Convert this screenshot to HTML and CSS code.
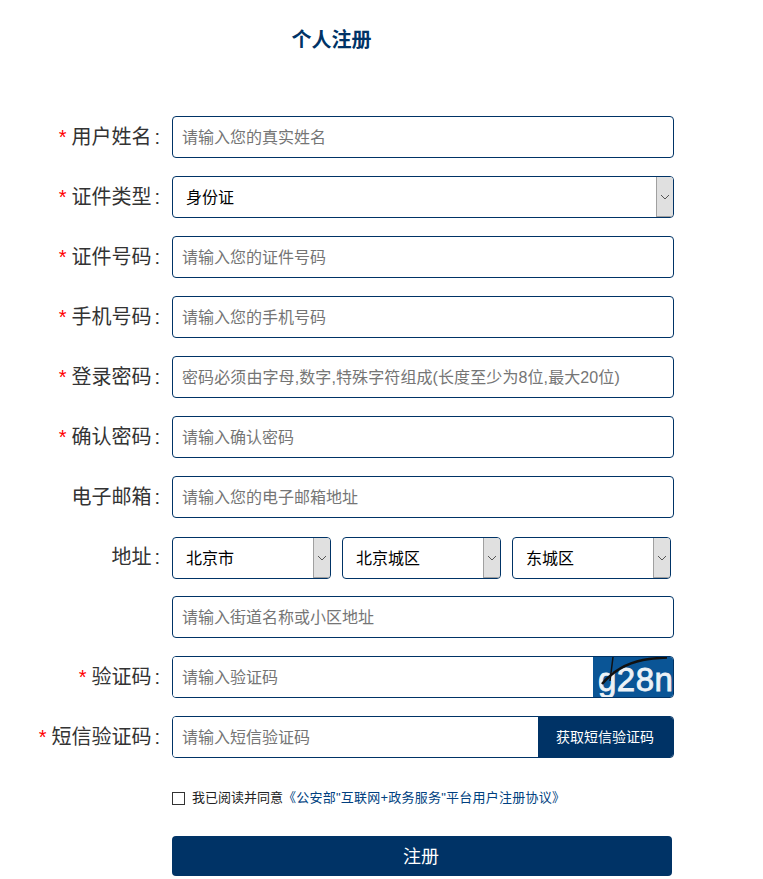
FILE: index.html
```html
<!DOCTYPE html>
<html lang="zh-CN">
<head>
    <meta charset="UTF-8">
    <meta name="viewport" content="width=device-width, initial-scale=1.0">
    <title>个人注册</title>
    <link rel="stylesheet" href="styles.css">
</head>
<body>
    <div class="register">
        <h1 class="title">个人注册</h1>
        <form class="form">
            <div class="row">
                <label class="label"><span class="star">*</span>用户姓名<span class="colon">:</span></label>
                <input class="input" type="text" placeholder="请输入您的真实姓名">
            </div>
            <div class="row">
                <label class="label"><span class="star">*</span>证件类型<span class="colon">:</span></label>
                <div class="select-box select-full">
                    <select class="select"><option>身份证</option></select>
                    <span class="arrow"><svg width="10" height="6" viewBox="0 0 10 6"><path d="M1 1l4 4 4-4" fill="none" stroke="#555" stroke-width="1"/></svg></span>
                </div>
            </div>
            <div class="row">
                <label class="label"><span class="star">*</span>证件号码<span class="colon">:</span></label>
                <input class="input" type="text" placeholder="请输入您的证件号码">
            </div>
            <div class="row">
                <label class="label"><span class="star">*</span>手机号码<span class="colon">:</span></label>
                <input class="input" type="text" placeholder="请输入您的手机号码">
            </div>
            <div class="row">
                <label class="label"><span class="star">*</span>登录密码<span class="colon">:</span></label>
                <input class="input input-long" type="password" placeholder="密码必须由字母,数字,特殊字符组成(长度至少为8位,最大20位)">
            </div>
            <div class="row">
                <label class="label"><span class="star">*</span>确认密码<span class="colon">:</span></label>
                <input class="input" type="password" placeholder="请输入确认密码">
            </div>
            <div class="row">
                <label class="label">电子邮箱<span class="colon">:</span></label>
                <input class="input" type="text" placeholder="请输入您的电子邮箱地址">
            </div>
            <div class="row">
                <label class="label">地址<span class="colon">:</span></label>
                <div class="address">
                    <div class="select-box">
                        <select class="select"><option>北京市</option></select>
                        <span class="arrow"><svg width="10" height="6" viewBox="0 0 10 6"><path d="M1 1l4 4 4-4" fill="none" stroke="#555" stroke-width="1"/></svg></span>
                    </div>
                    <div class="select-box">
                        <select class="select"><option>北京城区</option></select>
                        <span class="arrow"><svg width="10" height="6" viewBox="0 0 10 6"><path d="M1 1l4 4 4-4" fill="none" stroke="#555" stroke-width="1"/></svg></span>
                    </div>
                    <div class="select-box">
                        <select class="select"><option>东城区</option></select>
                        <span class="arrow"><svg width="10" height="6" viewBox="0 0 10 6"><path d="M1 1l4 4 4-4" fill="none" stroke="#555" stroke-width="1"/></svg></span>
                    </div>
                </div>
            </div>
            <div class="row">
                <span class="label"></span>
                <input class="input" type="text" placeholder="请输入街道名称或小区地址">
            </div>
            <div class="row">
                <label class="label"><span class="star">*</span>验证码<span class="colon">:</span></label>
                <div class="group">
                    <input class="group-input" type="text" placeholder="请输入验证码">
                    <svg class="captcha" width="80" height="40" viewBox="0 0 80 40">
                        <rect width="80" height="40" fill="#0a5596"/>
                        <text x="5" y="34" class="captcha-text">g28n</text>
                        <path d="M20 0L17 24" fill="none" stroke="#111" stroke-width="1.5"/>
                        <path d="M9 27C20 14 35 6 50 3C58 1.500 66 1 74 .5" fill="none" stroke="#111" stroke-width="2.500"/>
                    </svg>
                </div>
            </div>
            <div class="row">
                <label class="label"><span class="star">*</span>短信验证码<span class="colon">:</span></label>
                <div class="group">
                    <input class="group-input" type="text" placeholder="请输入短信验证码">
                    <button class="sms-btn" type="button">获取短信验证码</button>
                </div>
            </div>
            <div class="agree">
                <span class="checkbox"></span>
                <span>我已阅读并同意</span>
                <a class="agree-link" href="#">《公安部"互联网+政务服务"平台用户注册协议》</a>
            </div>
            <button class="submit" type="button">注册</button>
        </form>
    </div>
</body>
</html>
```

FILE: styles.css
```css
* {
    margin: 0;
    padding: 0;
    box-sizing: border-box;
}

body {
    font-family: "Liberation Sans", "Noto Sans CJK SC", sans-serif;
    background-color: #fff;
    color: #333;
}

.register {
    width: 763px;
    height: 879px;
    overflow: hidden;
}

.title {
    width: 663px;
    padding-top: 26px;
    font-size: 20px;
    line-height: 28px;
    font-weight: bold;
    text-align: center;
    color: #003366;
}

.form {
    padding-top: 62px;
}

.row {
    display: flex;
    align-items: flex-start;
    gap: 12px;
    height: 42px;
    margin-bottom: 18px;
}

.label {
    flex: none;
    width: 160px;
    font-size: 20px;
    line-height: 42px;
    text-align: right;
    white-space: nowrap;
}

.star {
    margin-right: 5px;
    color: #f00;
}

.colon {
    margin-left: 3px;
}

.input {
    width: 502px;
    height: 42px;
    padding: 2px 9px 0;
    font-family: inherit;
    font-size: 16px;
    border: 1px solid #003366;
    border-radius: 4px;
    outline: none;
}

.input-long {
    letter-spacing: .1px;
}

.input::placeholder,
.group-input::placeholder {
    color: #757575;
}

.select-box {
    position: relative;
    width: 159px;
    height: 42px;
}

.select-full {
    width: 502px;
}

.select {
    width: 100%;
    height: 100%;
    padding-left: 13px;
    font-family: inherit;
    font-size: 16px;
    color: #000;
    background-color: #fff;
    border: 1px solid #003366;
    border-radius: 4px;
    appearance: none;
    outline: none;
}

.arrow {
    position: absolute;
    top: 1px;
    right: 1px;
    bottom: 1px;
    width: 17px;
    display: flex;
    align-items: center;
    justify-content: center;
    background-color: #e0e0e0;
    border-left: 1px solid #a0a0a0;
    border-bottom: 1px solid #a0a0a0;
    border-radius: 0 3px 3px 0;
    pointer-events: none;
}

.address {
    display: flex;
    gap: 11px;
    margin-top: 1px;
}

.group {
    display: flex;
    width: 502px;
    height: 42px;
    border: 1px solid #003366;
    border-radius: 4px;
    overflow: hidden;
}

.group-input {
    flex: 1;
    min-width: 0;
    padding: 2px 9px 0;
    font-family: inherit;
    font-size: 16px;
    border: none;
    outline: none;
}

.captcha {
    flex: none;
    display: block;
}

.captcha-text {
    font-family: "Liberation Sans", sans-serif;
    font-size: 33px;
    letter-spacing: .5px;
    fill: #edf2f6;
    stroke: #edf2f6;
    stroke-width: .8;
}

.sms-btn {
    flex: none;
    width: 135px;
    padding: 0 1px 2px 0;
    font-family: inherit;
    font-size: 14px;
    color: #fff;
    background-color: #003366;
    border: none;
}

.agree {
    display: flex;
    align-items: center;
    margin: 31px 0 0 172px;
    font-size: 13px;
    line-height: 18px;
    color: #222;
    white-space: nowrap;
}

.checkbox {
    width: 13px;
    height: 13px;
    margin-right: 7px;
    border: 1px solid #333;
}

.agree-link {
    color: #003f7f;
    letter-spacing: .23px;
    text-decoration: none;
}

.submit {
    display: block;
    width: 500px;
    height: 40px;
    margin: 29px 0 0 172px;
    padding: 0 2px 2px 0;
    font-family: inherit;
    font-size: 18px;
    color: #fff;
    background-color: #003366;
    border: none;
    border-radius: 4px;
}
```
